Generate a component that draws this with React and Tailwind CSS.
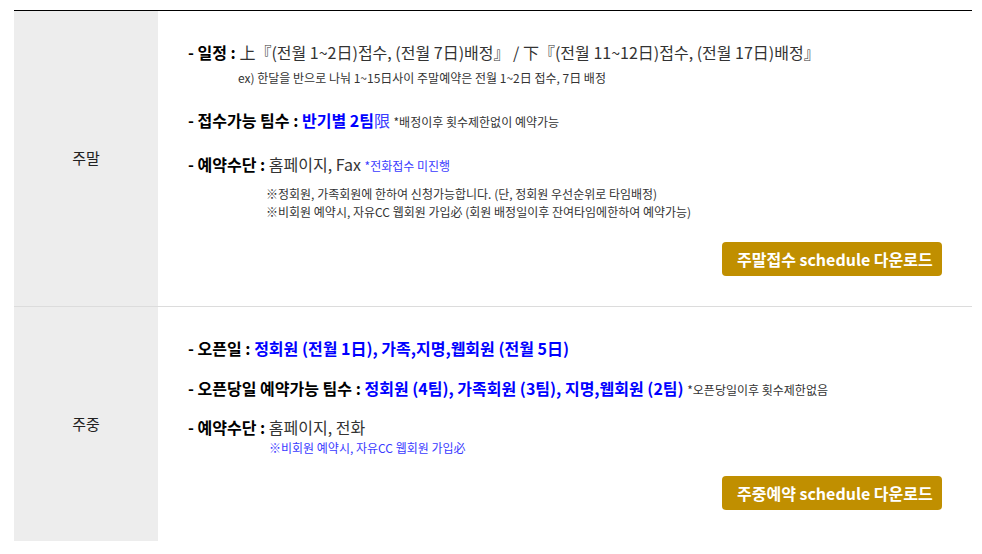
export default function App() {
  const font = { fontFamily: '"Noto Sans CJK KR", "Noto Sans", sans-serif' };
  return (
    <div className="w-[982px] h-[554px] bg-white pt-[10px] pl-[14px] pr-[10px] text-[#333]" style={font}>
      <div className="border-t border-black">
        {/* 주말 */}
        <div className="flex border-b border-[#dcdcdc]">
          <div className="w-[144px] shrink-0 bg-[#ededed] flex items-center justify-center text-[15px] text-[#222]">주말</div>
          <div className="flex-1 pl-[30px] pr-[30px] pt-[29px] pb-[30px]">
            <div className="h-[24px] leading-[24px] text-[16px] whitespace-nowrap">
              <b className="text-black">- 일정 :</b> 上『(전월 1~2日)접수, (전월 7日)배정』 / 下『(전월 11~12日)접수, (전월 17日)배정』
            </div>
            <div className="mt-[5px] h-[18px] pl-[50px] leading-[18px] text-[12px] whitespace-nowrap">
              ex) 한달을 반으로 나눠 1~15日사이 주말예약은 전월 1~2日 접수, 7日 배정
            </div>
            <div className="mt-[21px] h-[24px] leading-[24px] text-[16px] whitespace-nowrap">
              <b className="text-black">- 접수가능 팀수 :</b> <b className="text-[#0000ff]">반기별 2팀</b><span className="text-[#3a3aff]">限</span>{" "}
              <span className="text-[12px]">*배정이후 횟수제한없이 예약가능</span>
            </div>
            <div className="mt-[20px] h-[24px] leading-[24px] text-[16px] whitespace-nowrap">
              <b className="text-black">- 예약수단 :</b> 홈페이지, Fax{" "}
              <span className="text-[12px] text-[#3a3aff]">*전화접수 미진행</span>
            </div>
            <div className="mt-[9px] pl-[78px] text-[12px] whitespace-nowrap">
              <div className="h-[18px] leading-[18px]">※정회원, 가족회원에 한하여 신청가능합니다. (단, 정회원 우선순위로 타임배정)</div>
              <div className="h-[18px] leading-[18px]">※비회원 예약시, 자유CC 웹회원 가입必 (회원 배정일이후 잔여타임에한하여 예약가능)</div>
            </div>
            <div className="mt-[21px] flex justify-end">
              <div className="w-[220px] h-[34px] rounded-[4px] bg-[#c08f00] text-white font-bold text-[16px] flex items-center pl-[15px] whitespace-nowrap">
                주말접수 schedule 다운로드
              </div>
            </div>
          </div>
        </div>
        {/* 주중 */}
        <div className="flex">
          <div className="w-[144px] shrink-0 bg-[#ededed] flex items-center justify-center text-[15px] text-[#222]">주중</div>
          <div className="flex-1 pl-[30px] pr-[30px] pt-[29px] pb-[31px]">
            <div className="h-[24px] leading-[24px] text-[16px] whitespace-nowrap">
              <b className="text-black">- 오픈일 :</b> <b className="text-[#0000ff]">정회원 (전월 1日), 가족,지명,웹회원 (전월 5日)</b>
            </div>
            <div className="mt-[16px] h-[24px] leading-[24px] text-[16px] whitespace-nowrap">
              <b className="text-black">- 오픈당일 예약가능 팀수 :</b> <b className="text-[#0000ff]">정회원 (4팀), 가족회원 (3팀), 지명,웹회원 (2팀)</b>{" "}
              <span className="text-[12px]">*오픈당일이후 횟수제한없음</span>
            </div>
            <div className="mt-[15px] h-[24px] leading-[24px] text-[16px] whitespace-nowrap">
              <b className="text-black">- 예약수단 :</b> 홈페이지, 전화
            </div>
            <div className="mt-[1px] h-[16px] pl-[81px] leading-[16px] text-[12px] text-[#3a3aff] whitespace-nowrap">
              ※비회원 예약시, 자유CC 웹회원 가입必
            </div>
            <div className="mt-[20px] flex justify-end">
              <div className="w-[220px] h-[34px] rounded-[4px] bg-[#c08f00] text-white font-bold text-[16px] flex items-center pl-[15px] whitespace-nowrap">
                주중예약 schedule 다운로드
              </div>
            </div>
          </div>
        </div>
      </div>
    </div>
  );
}
